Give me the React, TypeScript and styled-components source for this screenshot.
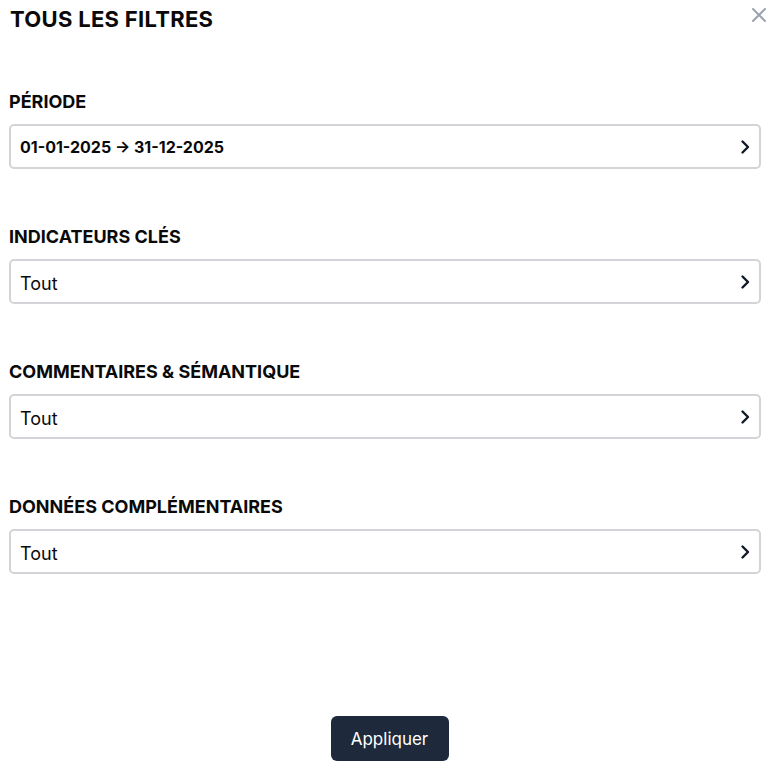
import React from "react";
import styled, { createGlobalStyle } from "styled-components";

const GlobalStyle = createGlobalStyle`
    html, body {
        margin : 0;
        padding : 0;
        background : #ffffff;
        font-family : Inter, "Liberation Sans", sans-serif;
        color : #0a0a0a;
    }
    * { box-sizing : border-box; }
`

const sections = [
    { label : 'PÉRIODE', value : '01-01-2025 → 31-12-2025', strong : true },
    { label : 'INDICATEURS CLÉS', value : 'Tout' },
    { label : 'COMMENTAIRES & SÉMANTIQUE', value : 'Tout' },
    { label : 'DONNÉES COMPLÉMENTAIRES', value : 'Tout' },
]

const ChevronRight = () => (
    <svg width="24" height="24" viewBox="0 0 24 24" fill="none" stroke="#111827" strokeWidth="2.4" strokeLinecap="round" strokeLinejoin="round">
        <path d="M9.5 6.5l5.5 5.5-5.5 5.5" />
    </svg>
)

const CloseIcon = () => (
    <svg width="20" height="20" viewBox="0 0 20 20" fill="none" stroke="#9ca3af" strokeWidth="2" strokeLinecap="round">
        <path d="M4 4l12 12M16 4L4 16" />
    </svg>
)

const App = () => {
    return(
        <>
            <GlobalStyle />
            <Modal>
                <Header>
                    <Title>TOUS LES FILTRES</Title>
                    <CloseButton><CloseIcon /></CloseButton>
                </Header>
                <Body>
                    {sections.map((s) => (
                        <Section key={s.label}>
                            <Label>{s.label}</Label>
                            <SelectBox>
                                <SelectValue strong={s.strong}>{s.value}</SelectValue>
                                <ChevronRight />
                            </SelectBox>
                        </Section>
                    ))}
                </Body>
                <Footer>
                    <ApplyButton>Appliquer</ApplyButton>
                </Footer>
            </Modal>
        </>
    )
}
export default App

const Modal = styled.div`
    display : flex;
    flex-direction : column;
    width : 778px;
    height : 772px;
    padding : 0 17px 0 9px;
`

const Header = styled.div`
    display : flex;
    justify-content : space-between;
    align-items : flex-start;
    padding-top : 4px;
    padding-left : 1px;
`

const Title = styled.div`
    font-size : 22px;
    font-weight : 700;
    line-height : 30px;
    letter-spacing : 0.3px;
`

const CloseButton = styled.div`
    display : flex;
    margin-top : 1px;
    margin-right : -8px;
`

const Body = styled.div`
    display : flex;
    flex-direction : column;
    gap : 54px;
    margin-top : 54px;
`

const Section = styled.div`
    display : flex;
    flex-direction : column;
    gap : 9px;
`

const Label = styled.div`
    font-size : 18px;
    font-weight : 700;
    line-height : 27px;
`

const SelectBox = styled.div`
    display : flex;
    align-items : center;
    justify-content : space-between;
    height : 45px;
    padding : 0 2px 0 9px;
    border : 2px solid #d4d4d8;
    border-radius : 5px;
`

const SelectValue = styled.span<{ strong? : boolean }>`
    font-size : ${p => p.strong ? '16px' : '18px'};
    font-weight : ${p => p.strong ? 700 : 400};
    padding-top : ${p => p.strong ? '0' : '3px'};
`

const Footer = styled.div`
    display : flex;
    justify-content : center;
    margin-top : auto;
    padding-bottom : 11px;
    padding-left : 9px;
`

const ApplyButton = styled.button`
    width : 118px;
    height : 45px;
    border : none;
    border-radius : 6px;
    background : #1e293b;
    color : #ffffff;
    font-family : inherit;
    font-size : 17px;
    font-weight : 400;
`
